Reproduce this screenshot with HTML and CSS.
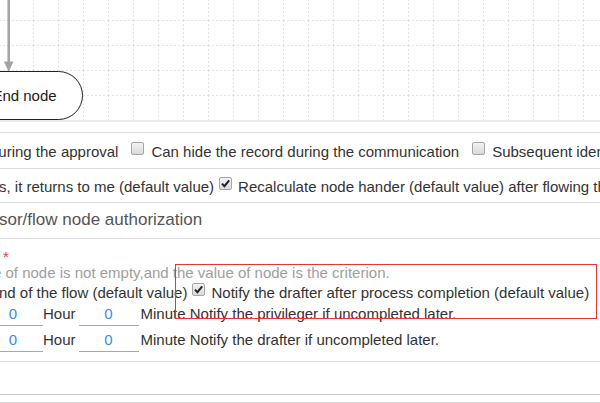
FILE: index.html
```html
<!DOCTYPE html>
<html>
<head>
<meta charset="utf-8">
<link rel="stylesheet" href="styles.css">
</head>
<body>
<div class="canvas">
  <svg class="grid" width="600" height="120" viewBox="0 0 600 120">
    <defs>
      <pattern id="g" x="8" y="20" width="25" height="25" patternUnits="userSpaceOnUse">
        <line x1="0.5" y1="0" x2="0.5" y2="25" stroke="#e2e2e2" stroke-width="1" stroke-dasharray="2 2"/>
        <line x1="0" y1="0.5" x2="25" y2="0.5" stroke="#e2e2e2" stroke-width="1" stroke-dasharray="2 2"/>
      </pattern>
    </defs>
    <rect width="600" height="120" fill="url(#g)"/>
    <line x1="8.7" y1="0" x2="8.7" y2="63" stroke="#a3a3a3" stroke-width="2.5"/>
    <polygon points="4,61.5 13.4,61.5 8.7,72" fill="#a3a3a3"/>
  </svg>
  <div class="node">End node</div>
</div>

<div class="form">
  <div class="row r1"><span class="cut1">during the approval</span><span class="cb cb-a"></span><span class="lbl">Can hide the record during the communication</span><span class="cb cb-a"></span><span class="lbl">Subsequent identical approvers are approved automatically</span></div>
  <div class="row r2"><span class="cut2">s, it returns to me (default value)</span><span class="cb checked cb-b"><svg viewBox="0 0 13 13" width="13" height="13"><path d="M3 6.6 L5.4 9.2 L10.2 3.4" fill="none" stroke="#222" stroke-width="2"/></svg></span><span class="lbl">Recalculate node hander (default value) after flowing through the node</span></div>
  <div class="row head"><span class="cut3">sor/flow node authorization</span></div>
  <div class="row block">
    <div class="req">*</div>
    <div class="hint"><span class="cut4">e of node is not empty,and the value of node is the criterion.</span></div>
    <div class="line"><span class="cut5">nd of the flow (default value)</span><span class="cb checked cb-c"><svg viewBox="0 0 13 13" width="13" height="13"><path d="M3 6.6 L5.4 9.2 L10.2 3.4" fill="none" stroke="#222" stroke-width="2"/></svg></span><span class="lbl">Notify the drafter after process completion (default value)</span></div>
    <div class="inrow"><span class="num first">0</span><span class="unit hour">Hour</span><span class="num">0</span><span class="unit minute">Minute Notify the privileger if uncompleted later.</span></div>
    <div class="inrow"><span class="num first">0</span><span class="unit hour">Hour</span><span class="num">0</span><span class="unit minute">Minute Notify the drafter if uncompleted later.</span></div>
  </div>
  <div class="row empty"></div>
  <div class="row foot"></div>
  <div class="redbox"></div>
</div>
</body>
</html>
```

FILE: styles.css
```css
html, body {
  margin: 0;
  padding: 0;
  background: #fff;
  overflow: hidden;
  width: 600px;
  height: 403px;
}
body {
  font-family: "Liberation Sans", Arial, sans-serif;
  font-size: 15px;
  color: #333;
  white-space: nowrap;
}
.canvas {
  position: relative;
  height: 120px;
  border-bottom: 2px solid #ececec;
  overflow: hidden;
}
.grid {
  display: block;
}
.node {
  position: absolute;
  left: -34px;
  top: 71px;
  width: 115px;
  height: 47px;
  border: 1.5px solid #222;
  border-radius: 25px;
  background: #fff;
  text-align: center;
  line-height: 47px;
  color: #1a1a1a;
}
.form {
  position: relative;
  margin-top: 10px;
}
.row {
  border-top: 1px solid #dcdcdc;
  line-height: 20px;
  overflow: hidden;
  box-sizing: border-box;
}
.r1 {
  height: 36px;
  padding-top: 9px;
}
.r2 {
  height: 34px;
  padding-top: 8px;
}
.head {
  height: 36px;
  padding-top: 3px;
  font-size: 17px;
  line-height: 28px;
  color: #555;
}
.cut1 { margin-left: -10px; }
.cut2 { margin-left: -1px; }
.cut3 { margin-left: -1px; }
.cut4 { margin-left: -7px; }
.cut5 { margin-left: -1px; }
.cb {
  display: inline-block;
  vertical-align: top;
  width: 11px;
  height: 11px;
  border: 1px solid #a6a6a6;
  border-radius: 2px;
  background: linear-gradient(#f2f2f2, #d9d9d9);
  position: relative;
}
.cb svg {
  position: absolute;
  left: -1px;
  top: -1px;
}
.cb-a { margin: 0 7px 0 13px; }
.cb-b { margin: 0 6px 0 5px; }
.cb-c { margin: 0 6px 0 5px; }
.block {
  height: 123px;
  padding-top: 10px;
}
.req {
  height: 14px;
  line-height: 16px;
  color: #e4393c;
  padding-left: 3px;
}
.hint {
  color: #9e9e9e;
  height: 20px;
}
.line {
  height: 20px;
}
.inrow {
  display: flex;
  align-items: flex-start;
  height: 26px;
  padding-top: 1px;
  box-sizing: border-box;
}
.num {
  display: block;
  width: 60px;
  height: 19px;
  line-height: 20px;
  padding-bottom: 2px;
  border-bottom: 1px solid #a9a9a9;
  text-align: center;
  color: #3a8ee6;
  flex: none;
}
.num.first {
  margin-left: -17px;
}
.hour {
  padding: 0 3px 0 0;
}
.minute {
  padding-left: 2px;
}
.empty {
  height: 33px;
}
.foot {
  height: 9px;
  border-top-color: #c6c6c6;
  border-bottom: 1px solid #dcdcdc;
}
.redbox {
  position: absolute;
  left: 175px;
  top: 132px;
  width: 420px;
  height: 53px;
  border: 1px solid #ee3333;
}
```
